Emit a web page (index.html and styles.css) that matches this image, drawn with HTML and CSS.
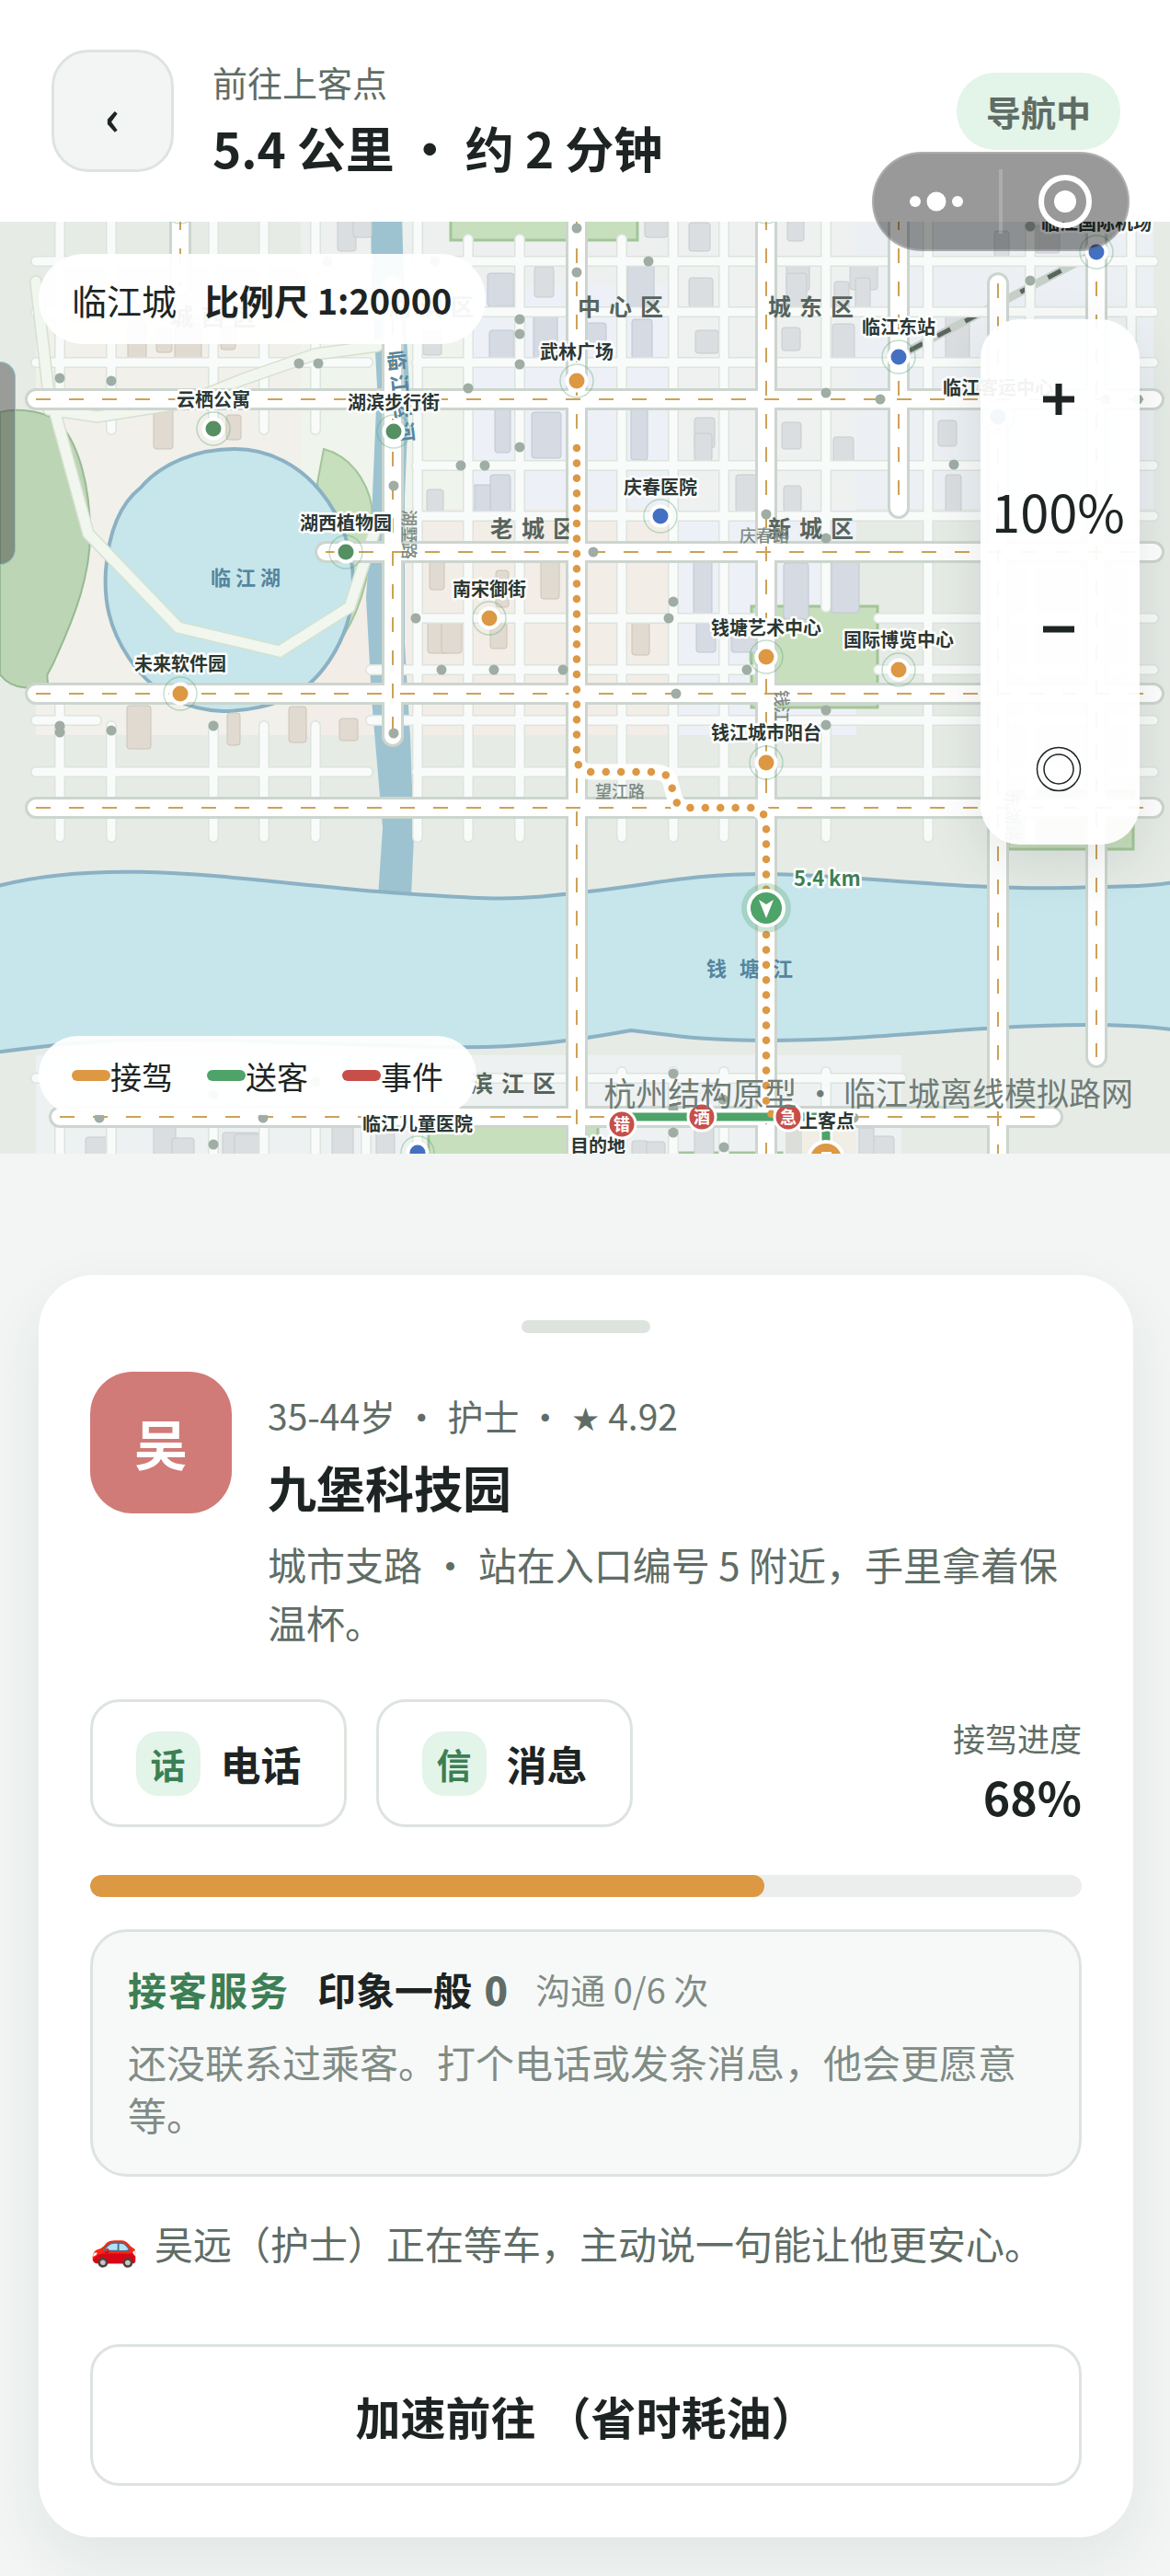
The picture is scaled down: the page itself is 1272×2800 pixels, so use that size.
FILE: index.html
```html
<!DOCTYPE html>
<html lang="zh-CN">
<head>
    <meta charset="UTF-8">
    <meta name="viewport" content="width=device-width, initial-scale=1.0">
    <title>前往上客点</title>
    <link rel="stylesheet" href="styles.css">
</head>
<body>
    <div class="capsule">
        <button class="capsuleBtn" aria-label="更多">
            <svg width="58" height="24" viewBox="0 0 58 24" fill="#fff">
                <circle cx="6" cy="12" r="6"/>
                <circle cx="29" cy="12" r="10.5"/>
                <circle cx="52" cy="12" r="6"/>
            </svg>
        </button>
        <span class="capsuleLine"></span>
        <button class="capsuleBtn" aria-label="关闭">
            <svg width="60" height="60" viewBox="0 0 60 60">
                <circle cx="30" cy="30" r="26" fill="none" stroke="#fff" stroke-width="6"/>
                <circle cx="30" cy="30" r="12" fill="#fff"/>
            </svg>
        </button>
    </div>

    <header class="topBar">
        <button class="backBtn" aria-label="返回">‹</button>
        <div class="tripTitle">
            <p>前往上客点</p>
            <h1>5.4 公里 · 约 2 分钟</h1>
        </div>
        <span class="navBadge">导航中</span>
    </header>

    <section class="mapBox">
        <svg class="map" viewBox="0 241 1272 1013">
            <defs>
                <path id="minor" d="M39 284H400M453 284H1254M39 339H1254M39 394H400M453 394H1254M453 506H1254M453 561H1254M453 672H833M955 672H1254M403 728H833M955 728H1254M39 783H105M403 783H1254M39 839H400M453 839H1254
                    M65 230V433M65 754V910M121 230V467M121 789V910M232 230V466M232 789V910M287 230V467M287 789V910M343 230V467M343 789V910M454 230V910M509 260V910M565 260V910M676 260V910M732 230V910M787 230V910M898 230V660M898 783V910M1009 230V910M1120 230V910M1230 230V839
                    M39 1172H980M65 1165V1270M121 1165V1270M232 1165V1270M287 1165V1270M343 1165V1270M398 1165V1270M454 1165V1270M676 1165V1270M732 1165V1270M787 1165V1270M898 1165V1270"/>
                <path id="major" d="M39 434H1254M354 600H1254M39 754H1254M39 878H1254M65 1214H1144
                    M196 234V311M427 311V800M627 234V1270M833 234V1270M977 234V552M1085 308V1270M1192 234V1149"/>
                <path id="scenic" d="M39 306L52 420L96 580L194 682L304 708L380 660L408 575M53 445L106 453L200 438L265 412L343 385L410 376"/>
                <path id="pickup" d="M627 487V822Q627 839 644 839H710Q726 839 729 850L733 866Q736 878 748 878H814Q833 878 833 897V1200Q833 1210 840 1211"/>
            </defs>

            <!-- districts -->
            <rect x="0" y="241" width="1272" height="1013" fill="#e6ebe6"/>
            <rect x="39" y="350" width="288" height="449" fill="#f2f0ea"/>
            <rect x="327" y="241" width="409" height="70" fill="#edf0ee"/>
            <rect x="327" y="310" width="188" height="243" fill="#eff4ec"/>
            <rect x="515" y="310" width="221" height="243" fill="#edf0f6"/>
            <rect x="736" y="241" width="195" height="312" fill="#eff0f0"/>
            <rect x="931" y="241" width="323" height="312" fill="#ecf0f4"/>
            <rect x="327" y="553" width="409" height="246" fill="#f3ede7"/>
            <rect x="736" y="553" width="195" height="246" fill="#edf0f6"/>
            <rect x="39" y="1147" width="941" height="107" fill="#edf1f2"/>
            <rect x="854" y="1226" width="18" height="28" fill="#dcded9"/>
            <rect x="872" y="1226" width="58" height="28" fill="#f0eee5"/>

            <!-- parks -->
            <g fill="#c7dfbd" stroke="#a3c599" stroke-width="3">
                <path d="M352 488C388 498 405 535 405 562C405 612 396 655 374 690L345 525Z" stroke-width="2"/>
                <rect x="490" y="230" width="203" height="31"/>
                <rect x="817" y="659" width="137" height="110"/>
                <rect x="1096" y="860" width="136" height="63"/>
                <rect x="466" y="1220" width="184" height="50"/>
                <rect x="738" y="1253" width="112" height="20"/>
            </g>
            <path d="M0 448C20 443 46 447 60 456C86 478 98 530 98 580C98 625 82 668 62 712C52 737 50 728 52 742C40 751 12 750 0 733Z" fill="#bcd5b4" stroke="#97b994" stroke-width="2"/>

            <!-- water -->
            <path d="M403 230L404 310L410 420L404 560L398 650L404 760L416 900L411 975L447 975L450 910L446 800L440 700L440 540L445 420L439 310L437 230Z" fill="#9dc3d1"/>
            <path d="M153 530C176 503 215 488 255 488C332 488 384 562 384 634C384 690 352 734 325 752C298 769 262 773 242 773C194 771 162 748 140 715C118 682 113 652 115 620C118 580 130 548 153 530Z" fill="#c6e6eb" stroke="#8bb1c4" stroke-width="4"/>
            <path d="M-6 964C120 930 270 958 411 969S560 978 640 969S750 950 833 950S1050 968 1160 965S1240 963 1280 959V1120C1250 1115 1210 1114 1180 1114C1060 1114 960 1131 833 1131C760 1131 730 1125 686 1120C620 1132 560 1140 480 1138C380 1136 330 1132 240 1131C120 1128 80 1133 -6 1144Z" fill="#c6e6eb" stroke="#8bb1c4" stroke-width="4"/>

            <!-- buildings -->
            <g class="bldGray">
                <rect x="367" y="236" width="20" height="37" rx="3"/><rect x="384" y="236" width="20" height="22" rx="3"/>
                <rect x="581" y="290" width="21" height="33" rx="3"/><rect x="701" y="236" width="25" height="22" rx="3"/>
                <rect x="749" y="242" width="23" height="31" rx="3"/><rect x="856" y="238" width="18" height="24" rx="3"/>
                <rect x="749" y="302" width="26" height="32" rx="3"/><rect x="855" y="288" width="25" height="28" rx="3"/>
                <rect x="855" y="297" width="22" height="38" rx="3"/><rect x="907" y="306" width="16" height="30" rx="3"/>
                <rect x="924" y="286" width="30" height="29" rx="3"/><rect x="930" y="302" width="16" height="34" rx="3"/>
                <rect x="756" y="359" width="25" height="25" rx="3"/><rect x="850" y="356" width="20" height="25" rx="3"/>
                <rect x="905" y="352" width="24" height="38" rx="3"/><rect x="1028" y="342" width="26" height="48" rx="3"/>
                <rect x="1081" y="251" width="16" height="28" rx="3"/><rect x="1125" y="245" width="27" height="30" rx="3"/>
                <rect x="755" y="454" width="22" height="33" rx="3"/><rect x="755" y="471" width="19" height="30" rx="3"/>
                <rect x="850" y="459" width="21" height="29" rx="3"/><rect x="906" y="475" width="22" height="27" rx="3"/>
                <rect x="1020" y="457" width="20" height="28" rx="3"/><rect x="800" y="516" width="22" height="40" rx="3"/>
                <rect x="852" y="528" width="19" height="28" rx="3"/><rect x="1028" y="516" width="17" height="40" rx="3"/>
                <rect x="460" y="360" width="20" height="26" rx="3"/><rect x="464" y="532" width="18" height="24" rx="3"/>
                <rect x="93" y="1236" width="26" height="30" rx="3"/><rect x="167" y="1220" width="24" height="40" rx="3"/>
                <rect x="187" y="1237" width="24" height="30" rx="3"/><rect x="242" y="1231" width="40" height="30" rx="3"/>
                <rect x="255" y="1233" width="30" height="30" rx="3"/><rect x="361" y="1220" width="23" height="40" rx="3"/>
                <rect x="409" y="1220" width="20" height="40" rx="3"/><rect x="687" y="1240" width="18" height="30" rx="3"/>
                <rect x="703" y="1241" width="20" height="30" rx="3"/><rect x="755" y="1220" width="21" height="40" rx="3"/>
                <rect x="945" y="1235" width="27" height="30" rx="3"/><rect x="934" y="1226" width="16" height="40"/>
            </g>
            <g class="bldBlue">
                <rect x="530" y="297" width="29" height="36" rx="3"/><rect x="532" y="359" width="27" height="32" rx="3"/>
                <rect x="580" y="342" width="26" height="48" rx="3"/><rect x="682" y="286" width="29" height="48" rx="3"/>
                <rect x="687" y="347" width="22" height="43" rx="3"/><rect x="638" y="351" width="21" height="22" rx="3"/>
                <rect x="538" y="442" width="17" height="50" rx="3"/><rect x="578" y="448" width="32" height="50" rx="3"/>
                <rect x="516" y="527" width="20" height="30"/><rect x="533" y="516" width="22" height="40" rx="3"/>
                <rect x="686" y="442" width="18" height="58" rx="3"/><rect x="754" y="608" width="20" height="60" rx="3"/>
                <rect x="757" y="676" width="21" height="33" rx="3"/><rect x="795" y="676" width="29" height="33" rx="3"/>
            </g>
            <g class="bldTan">
                <rect x="139" y="350" width="20" height="40" rx="3"/><rect x="170" y="357" width="17" height="26" rx="3"/>
                <rect x="190" y="352" width="29" height="38" rx="3"/><rect x="240" y="355" width="16" height="25" rx="3"/>
                <rect x="167" y="440" width="21" height="48" rx="3"/><rect x="246" y="451" width="16" height="27" rx="3"/>
                <rect x="467" y="608" width="16" height="33" rx="3"/><rect x="539" y="620" width="14" height="40" rx="3"/>
                <rect x="588" y="608" width="20" height="43" rx="3"/><rect x="465" y="674" width="22" height="36" rx="3"/>
                <rect x="480" y="674" width="22" height="36" rx="3"/><rect x="533" y="676" width="18" height="29" rx="3"/>
                <rect x="138" y="767" width="26" height="47" rx="3"/><rect x="247" y="775" width="14" height="35" rx="3"/>
                <rect x="314" y="768" width="19" height="39" rx="3"/><rect x="369" y="781" width="20" height="24" rx="3"/>
                <rect x="687" y="676" width="19" height="36" rx="3"/>
            </g>

            <!-- railway -->
            <path d="M977 387L1192 274" stroke="#c8cfc9" stroke-width="9"/>
            <path d="M989 381L1192 274" stroke="#59665f" stroke-width="5" stroke-dasharray="16 18"/>

            <!-- roads -->
            <use href="#minor" class="minorEdge"/>
            <use href="#minor" class="minorRoad"/>
            <g class="bldBlue">
                <rect x="852" y="612" width="27" height="61" rx="3"/><rect x="904" y="608" width="30" height="58" rx="3"/>
            </g>
            <use href="#scenic" class="scenicEdge"/>
            <use href="#scenic" class="scenicRoad"/>
            <use href="#major" class="majorEdge"/>
            <use href="#major" class="majorRoad"/>
            <use href="#major" class="majorDash"/>

            <g fill="#9fada4">
                <circle cx="356" cy="284" r="5.5"/><circle cx="473" cy="284" r="5.5"/><circle cx="627" cy="248" r="5.5"/>
                <circle cx="627" cy="296" r="5.5"/><circle cx="565" cy="347" r="5.5"/><circle cx="565" cy="363" r="5.5"/>
                <circle cx="325" cy="395" r="5.5"/><circle cx="346" cy="395" r="5.5"/><circle cx="565" cy="396" r="5.5"/>
                <circle cx="705" cy="284" r="5.5"/><circle cx="1120" cy="246" r="5.5"/><circle cx="1120" cy="305" r="5.5"/>
                <circle cx="65" cy="411" r="5.5"/><circle cx="121" cy="414" r="5.5"/><circle cx="509" cy="422" r="5.5"/>
                <circle cx="565" cy="486" r="5.5"/><circle cx="501" cy="506" r="5.5"/><circle cx="527" cy="506" r="5.5"/>
                <circle cx="428" cy="528" r="5.5"/><circle cx="452" cy="672" r="5.5"/><circle cx="480" cy="728" r="5.5"/>
                <circle cx="537" cy="728" r="5.5"/><circle cx="612" cy="728" r="5.5"/><circle cx="65" cy="789" r="5.5"/>
                <circle cx="65" cy="796" r="5.5"/><circle cx="121" cy="794" r="5.5"/><circle cx="232" cy="789" r="5.5"/>
                <circle cx="428" cy="797" r="5.5"/><circle cx="898" cy="427" r="5.5"/><circle cx="957" cy="434" r="5.5"/>
                <circle cx="1202" cy="434" r="5.5"/><circle cx="1237" cy="434" r="5.5"/><circle cx="1037" cy="505" r="5.5"/>
                <circle cx="833" cy="559" r="5.5"/><circle cx="645" cy="600" r="5.5"/><circle cx="898" cy="585" r="5.5"/>
                <circle cx="732" cy="654" r="5.5"/><circle cx="727" cy="672" r="5.5"/><circle cx="812" cy="728" r="5.5"/>
                <circle cx="735" cy="754" r="5.5"/><circle cx="898" cy="772" r="5.5"/><circle cx="898" cy="788" r="5.5"/>
                <circle cx="108" cy="1215" r="5.5"/><circle cx="286" cy="1215" r="5.5"/><circle cx="232" cy="1244" r="5.5"/>
                <circle cx="232" cy="1190" r="5.5"/><circle cx="343" cy="1176" r="5.5"/><circle cx="732" cy="1167" r="5.5"/>
                <circle cx="786" cy="1195" r="5.5"/><circle cx="732" cy="1205" r="5.5"/><circle cx="732" cy="1231" r="5.5"/>
                <circle cx="787" cy="1247" r="5.5"/><circle cx="928" cy="1215" r="5.5"/>
            </g>

            <!-- area names -->
            <g class="areaName">
                <text x="185" y="354">城西区</text>
                <text x="422" y="343">湖滨区</text>
                <text x="628" y="343">中心区</text>
                <text x="835" y="343">城东区</text>
                <text x="533" y="584">老城区</text>
                <text x="835" y="584">新城区</text>
                <text x="511" y="1187">滨江区</text>
            </g>
            <g class="waterName">
                <text x="229" y="636" class="lakeName">临江湖</text>
                <text x="768" y="1061" class="riverName">钱塘江</text>
                <text x="0" y="0" class="canalName" transform="translate(422 382) rotate(83)">临江运河</text>
            </g>
            <g class="roadName">
                <text x="831" y="589">庆春路</text>
                <text x="674" y="867">望江路</text>
                <text x="0" y="0" transform="translate(438 581) rotate(90)">湖墅路</text>
                <text x="0" y="0" transform="translate(843 777) rotate(90)">钱江路</text>
                <text x="0" y="0" transform="translate(1094 887) rotate(90)">东湖路</text>
            </g>

            <!-- route -->
            <use href="#pickup" fill="none" stroke="#fff" stroke-width="17" stroke-linecap="round"/>
            <path d="M682 1214H898V1254" fill="none" stroke="#fff" stroke-width="14"/>
            <path d="M682 1214H898V1254" fill="none" stroke="#4ea369" stroke-width="9"/>
            <use href="#pickup" fill="none" stroke="#dc9843" stroke-width="8.5" stroke-linecap="round" stroke-dasharray="0 16.4"/>

            <!-- places -->
            <g class="halo">
                <circle cx="232" cy="466" r="18"/><circle cx="428" cy="469" r="18"/><circle cx="376" cy="600" r="18"/>
                <circle cx="532" cy="672" r="18"/><circle cx="196" cy="754" r="18"/><circle cx="627" cy="414" r="18"/>
                <circle cx="718" cy="561" r="18"/><circle cx="977" cy="388" r="18"/><circle cx="1085" cy="453" r="18"/>
                <circle cx="1192" cy="274" r="18"/><circle cx="833" cy="714" r="18"/><circle cx="977" cy="728" r="18"/>
                <circle cx="833" cy="829" r="18"/><circle cx="454" cy="1253" r="18"/>
                <circle cx="196" cy="225" r="18"/><circle cx="833" cy="225" r="18"/>
            </g>
            <g class="pin pinGreen">
                <circle cx="232" cy="466" r="10.5"/><circle cx="428" cy="469" r="10.5"/><circle cx="376" cy="600" r="10.5"/>
            </g>
            <g class="pin pinOrange">
                <circle cx="532" cy="672" r="10.5"/><circle cx="196" cy="754" r="10.5"/><circle cx="627" cy="414" r="10.5"/>
                <circle cx="833" cy="714" r="10.5"/><circle cx="977" cy="728" r="10.5"/><circle cx="833" cy="829" r="10.5"/>
            </g>
            <g class="pin pinBlue">
                <circle cx="718" cy="561" r="10.5"/><circle cx="977" cy="388" r="10.5"/><circle cx="1085" cy="453" r="10.5"/>
                <circle cx="1192" cy="274" r="10.5"/><circle cx="454" cy="1253" r="10.5"/>
            </g>
            <g class="placeName">
                <text x="232" y="442">云栖公寓</text>
                <text x="428" y="445">湖滨步行街</text>
                <text x="376" y="576">湖西植物园</text>
                <text x="532" y="648">南宋御街</text>
                <text x="196" y="729">未来软件园</text>
                <text x="627" y="390">武林广场</text>
                <text x="718" y="537">庆春医院</text>
                <text x="977" y="363">临江东站</text>
                <text x="1085" y="429">临江客运中心</text>
                <text x="1192" y="250">临江国际机场</text>
                <text x="833" y="690">钱塘艺术中心</text>
                <text x="977" y="703">国际博览中心</text>
                <text x="833" y="804">钱江城市阳台</text>
                <text x="454" y="1229">临江儿童医院</text>
                <text x="650" y="1253">目的地</text>
            </g>

            <!-- car and events -->
            <circle cx="833" cy="987" r="27" fill="#4ea369" fill-opacity=".28"/>
            <circle cx="833" cy="987" r="19" fill="#4ea369" stroke="#fff" stroke-width="4"/>
            <path d="M825 978L833 983L841 978L833 998Z" fill="#fff"/>
            <text x="863" y="963" class="carDist">5.4 km</text>
            <circle cx="898" cy="1260" r="19" fill="#dc9843" stroke="#fff" stroke-width="4"/>
            <rect x="893" y="1252" width="11" height="8" fill="#fff"/>
            <g class="eventDot">
                <circle cx="676" cy="1222" r="15"/><circle cx="763" cy="1214" r="15"/><circle cx="857" cy="1214" r="15"/>
                <text x="676" y="1229">错</text>
                <text x="763" y="1221">酒</text>
                <text x="857" y="1221">急</text>
            </g>
            <g class="placeName"><text x="899" y="1226">上客点</text></g>
        </svg>

        <div class="scalePill"><span>临江城</span><strong>比例尺 1:20000</strong></div>
        <div class="sideTab"></div>
        <div class="zoomBox">
            <button aria-label="放大"><svg width="34" height="34" viewBox="0 0 34 34"><path d="M17 0V34M0 17H34" stroke="#1d2423" stroke-width="7"/></svg></button>
            <span>100%</span>
            <button aria-label="缩小"><svg width="34" height="34" viewBox="0 0 34 34"><path d="M0 17H34" stroke="#1d2423" stroke-width="7"/></svg></button>
            <button class="locateBtn" aria-label="定位"><svg width="50" height="50" viewBox="0 0 50 50" fill="none" stroke="#1d2423" stroke-width="1.5"><circle cx="25" cy="25" r="23.5"/><circle cx="25" cy="25" r="16"/></svg></button>
        </div>
        <div class="legend">
            <span class="pick">接驾</span>
            <span class="send">送客</span>
            <span class="event">事件</span>
        </div>
        <p class="mapNote">杭州结构原型 · 临江城离线模拟路网</p>
    </section>

    <main class="tripCard">
        <div class="handle"></div>
        <div class="rider">
            <div class="avatar">吴</div>
            <div class="riderInfo">
                <p class="riderMeta">35-44岁 · 护士 · <span class="star">★</span> 4.92</p>
                <h2>九堡科技园</h2>
                <p class="riderPlace">城市支路 · 站在入口编号 5 附近，手里拿着保温杯。</p>
            </div>
        </div>
        <div class="actions">
            <button><i>话</i>电话</button>
            <button><i>信</i>消息</button>
            <div class="percent">
                <p>接驾进度</p>
                <strong>68%</strong>
            </div>
        </div>
        <div class="progress"><div class="progressFill" style="width: 68%"></div></div>
        <div class="service">
            <div class="serviceHead">
                <strong class="serviceTitle">接客服务</strong>
                <strong>印象一般 <b>0</b></strong>
                <span>沟通 0/6 次</span>
            </div>
            <p>还没联系过乘客。打个电话或发条消息，他会更愿意等。</p>
        </div>
        <div class="hint"><span>🚗</span><p>吴远（护士）正在等车，主动说一句能让他更安心。</p></div>
        <button class="speedBtn">加速前往 （省时耗油）</button>
    </main>
</body>
</html>
```

FILE: styles.css
```css
*{
    padding: 0px;
    margin: 0px;
    box-sizing: border-box;
}
body{
    width: 100%;
    position: relative;
    background-color: #f2f5f4;
    color: #1d2423;
    font-family: "Noto Sans CJK SC", "Noto Sans", sans-serif;
}
button{
    font-family: inherit;
    color: inherit;
    cursor: pointer;
    outline: none;
}

/* top bar */
.topBar{
    display: flex;
    align-items: flex-start;
    padding: 54px 54px 54px 56px;
    background-color: white;
}
.backBtn{
    width: 133px;
    height: 133px;
    padding-top: 8px;
    border: 3px solid #dde4de;
    border-radius: 40px;
    background-color: #f2f5f4;
    font-size: 52px;
    font-weight: bold;
    line-height: 72px;
}
.tripTitle{
    flex: 1;
    margin-left: 42px;
    padding-top: 8px;
}
.tripTitle > p{
    font-size: 38px;
    line-height: 54px;
    color: #5f6d66;
}
.tripTitle > h1{
    margin-top: 8px;
    margin-bottom: -10px;
    font-size: 53px;
    line-height: 73px;
}
.navBadge{
    margin-top: 25px;
    padding: 0 32px;
    border-radius: 42px;
    background-color: #e3f4e9;
    color: #5f6d66;
    font-size: 38px;
    font-weight: bold;
    line-height: 84px;
}
.capsule{
    position: absolute;
    z-index: 2;
    top: 165px;
    right: 44px;
    width: 280px;
    height: 108px;
    display: flex;
    align-items: center;
    border: 2px solid rgba(255, 255, 255, 0.2);
    border-radius: 54px;
    background-color: rgba(0, 0, 0, 0.4);
}
.capsuleBtn{
    flex: 1;
    display: flex;
    align-items: center;
    justify-content: center;
    border: none;
    background: none;
}
.capsuleLine{
    width: 4px;
    height: 70px;
    background-color: rgba(255, 255, 255, 0.2);
}

/* map */
.mapBox{
    position: relative;
}
.map{
    display: block;
    width: 100%;
}
.bldGray{
    fill: #dbdee0;
    stroke: #c8ccce;
}
.bldBlue{
    fill: #d5dae3;
    stroke: #c0c7d3;
}
.bldTan{
    fill: #e0dad1;
    stroke: #ccc4b9;
}
.minorEdge, .minorRoad, .majorEdge, .majorRoad, .majorDash, .scenicEdge, .scenicRoad{
    fill: none;
    stroke-linecap: round;
}
.minorEdge{
    stroke: #dbe4dd;
    stroke-width: 12;
}
.minorRoad{
    stroke: #f9fbfa;
    stroke-width: 9;
}
.scenicEdge{
    stroke: #d5e1ce;
    stroke-width: 14;
}
.scenicRoad{
    stroke: #f1f6ef;
    stroke-width: 11;
}
.majorEdge{
    stroke: #ccd5ce;
    stroke-width: 24;
}
.majorRoad{
    stroke: #fff;
    stroke-width: 18;
}
.majorDash{
    stroke: #cda257;
    stroke-width: 2;
    stroke-linecap: butt;
    stroke-dasharray: 16 20;
}
.areaName{
    fill: #56645d;
    font-size: 25px;
    font-weight: bold;
    letter-spacing: 9px;
}
.waterName{
    fill: #55859e;
    font-size: 22px;
    font-weight: bold;
}
.lakeName{
    letter-spacing: 5px;
}
.riverName{
    letter-spacing: 14px;
}
.canalName{
    letter-spacing: 4px;
}
.roadName{
    fill: #7c8a83;
    font-size: 18px;
    font-weight: 500;
    text-anchor: middle;
}
.halo{
    fill: none;
    stroke: #4ea369;
    stroke-opacity: 0.35;
    stroke-width: 1.5;
}
.pin{
    stroke: #fff;
    stroke-width: 4;
}
.pinGreen{
    fill: #558f62;
}
.pinOrange{
    fill: #dc9843;
}
.pinBlue{
    fill: #4470c2;
}
.placeName{
    fill: #2b3733;
    stroke: #fff;
    stroke-width: 5;
    stroke-linejoin: round;
    paint-order: stroke;
    font-size: 20px;
    font-weight: bold;
    text-anchor: middle;
}
.carDist{
    fill: #3c7f54;
    stroke: #fff;
    stroke-width: 5;
    stroke-linejoin: round;
    paint-order: stroke;
    font-size: 22px;
    font-weight: bold;
}
.eventDot circle{
    fill: #c84f49;
    stroke: #fff;
    stroke-width: 3;
}
.eventDot text{
    fill: #fff;
    font-size: 18px;
    font-weight: bold;
    text-anchor: middle;
}
.scalePill{
    position: absolute;
    top: 35px;
    left: 42px;
    height: 98px;
    padding: 0 36px;
    display: flex;
    align-items: center;
    gap: 30px;
    border-radius: 49px;
    background-color: rgba(255, 255, 255, 0.94);
    font-size: 38px;
}
.sideTab{
    position: absolute;
    top: 152px;
    left: 0;
    width: 17px;
    height: 221px;
    border: 1px solid #8cc3c9;
    border-left: none;
    border-radius: 0 17px 17px 0;
    background-color: rgba(60, 60, 60, 0.45);
}
.zoomBox{
    position: absolute;
    top: 106px;
    right: 33px;
    width: 173px;
    padding: 24px 4px 7px 0;
    display: flex;
    flex-direction: column;
    border-radius: 43px;
    background-color: rgba(255, 255, 255, 0.94);
    box-shadow: 0 20px 60px rgba(30, 50, 40, 0.12);
}
.zoomBox > button, .zoomBox > span{
    height: 125px;
    display: flex;
    align-items: center;
    justify-content: center;
    border: none;
    background: none;
    font-size: 56px;
}
.zoomBox > span{
    padding-bottom: 8px;
}
.zoomBox > .locateBtn{
    height: 165px;
    padding-top: 14px;
}
.legend{
    position: absolute;
    bottom: 42px;
    left: 42px;
    height: 86px;
    padding: 0 36px;
    display: flex;
    align-items: center;
    gap: 37px;
    border-radius: 43px;
    background-color: rgba(255, 255, 255, 0.94);
    font-size: 34px;
}
.legend > span{
    display: flex;
    align-items: center;
}
.legend > span::before{
    content: "";
    width: 42px;
    height: 12px;
    border-radius: 6px;
}
.legend > .pick::before{
    background-color: #dc9843;
}
.legend > .send::before{
    background-color: #4ea369;
}
.legend > .event::before{
    background-color: #c84f49;
}
.mapNote{
    position: absolute;
    right: 40px;
    bottom: 42px;
    color: #6f7c76;
    font-size: 35px;
    line-height: 50px;
}

/* trip card */
.tripCard{
    margin: 132px 40px 42px 42px;
    padding: 49px 56px 56px;
    border-radius: 60px;
    background-color: white;
    box-shadow: 0 24px 64px rgba(30, 45, 38, 0.08);
}
.handle{
    width: 140px;
    height: 14px;
    margin: 0 auto 42px;
    border-radius: 7px;
    background-color: #dde4de;
}
.rider{
    display: flex;
    gap: 39px;
}
.avatar{
    width: 154px;
    height: 154px;
    border-radius: 46px;
    background-color: #d07b77;
    color: white;
    font-size: 58px;
    font-weight: bold;
    line-height: 154px;
    text-align: center;
}
.riderInfo{
    flex: 1;
    padding-top: 20px;
}
.riderMeta{
    color: #5f6d66;
    font-size: 39px;
    line-height: 54px;
}
.star{
    font-family: "DejaVu Sans", sans-serif;
    font-size: 35px;
    line-height: 1;
}
.riderInfo > h2{
    margin-top: 15px;
    font-size: 53px;
    line-height: 73px;
}
.riderPlace{
    margin-top: 15px;
    color: #5f6d66;
    font-size: 42px;
    line-height: 63px;
}
.actions{
    margin-top: 53px;
    display: flex;
    gap: 32px;
}
.actions > button{
    width: 279px;
    height: 139px;
    display: flex;
    align-items: center;
    justify-content: center;
    gap: 22px;
    border: 3px solid #dde4de;
    border-radius: 32px;
    background-color: white;
    font-size: 44px;
    font-weight: bold;
}
.actions > button > i{
    width: 70px;
    border-radius: 24px;
    background-color: #e3f4e9;
    color: #3c7f54;
    font-size: 38px;
    font-style: normal;
    line-height: 70px;
}
.percent{
    margin-left: auto;
    padding-top: 17px;
    text-align: right;
}
.percent > p{
    color: #5f6d66;
    font-size: 35px;
    line-height: 50px;
}
.percent > strong{
    display: block;
    margin-top: 4px;
    font-size: 50px;
    line-height: 68px;
}
.progress{
    height: 24px;
    margin-top: 52px;
    border-radius: 12px;
    background-color: #eceeed;
    overflow: hidden;
}
.progressFill{
    height: 100%;
    border-radius: 12px;
    background-color: #dc9843;
}
.service{
    margin-top: 35px;
    padding: 32px 38px 37px;
    border: 3px solid #dde4de;
    border-radius: 40px;
    background-color: #f7f9f8;
    font-size: 42px;
}
.serviceHead{
    display: flex;
    align-items: center;
    gap: 30px;
    line-height: 60px;
}
.serviceTitle{
    color: #3c7f54;
    letter-spacing: 2px;
}
.serviceHead b{
    margin-left: 4px;
    color: #5f6d66;
}
.serviceHead > span{
    color: #808c86;
    font-size: 38px;
}
.service > p{
    margin-top: 20px;
    color: #808c86;
    line-height: 57px;
}
.hint{
    margin-top: 40px;
    display: flex;
    gap: 18px;
    color: #5f6d66;
    font-size: 42px;
    line-height: 63px;
}
.speedBtn{
    width: 100%;
    height: 154px;
    margin-top: 79px;
    border: 3px solid #dde4de;
    border-radius: 32px;
    background-color: white;
    font-size: 49px;
    font-weight: bold;
}
```
